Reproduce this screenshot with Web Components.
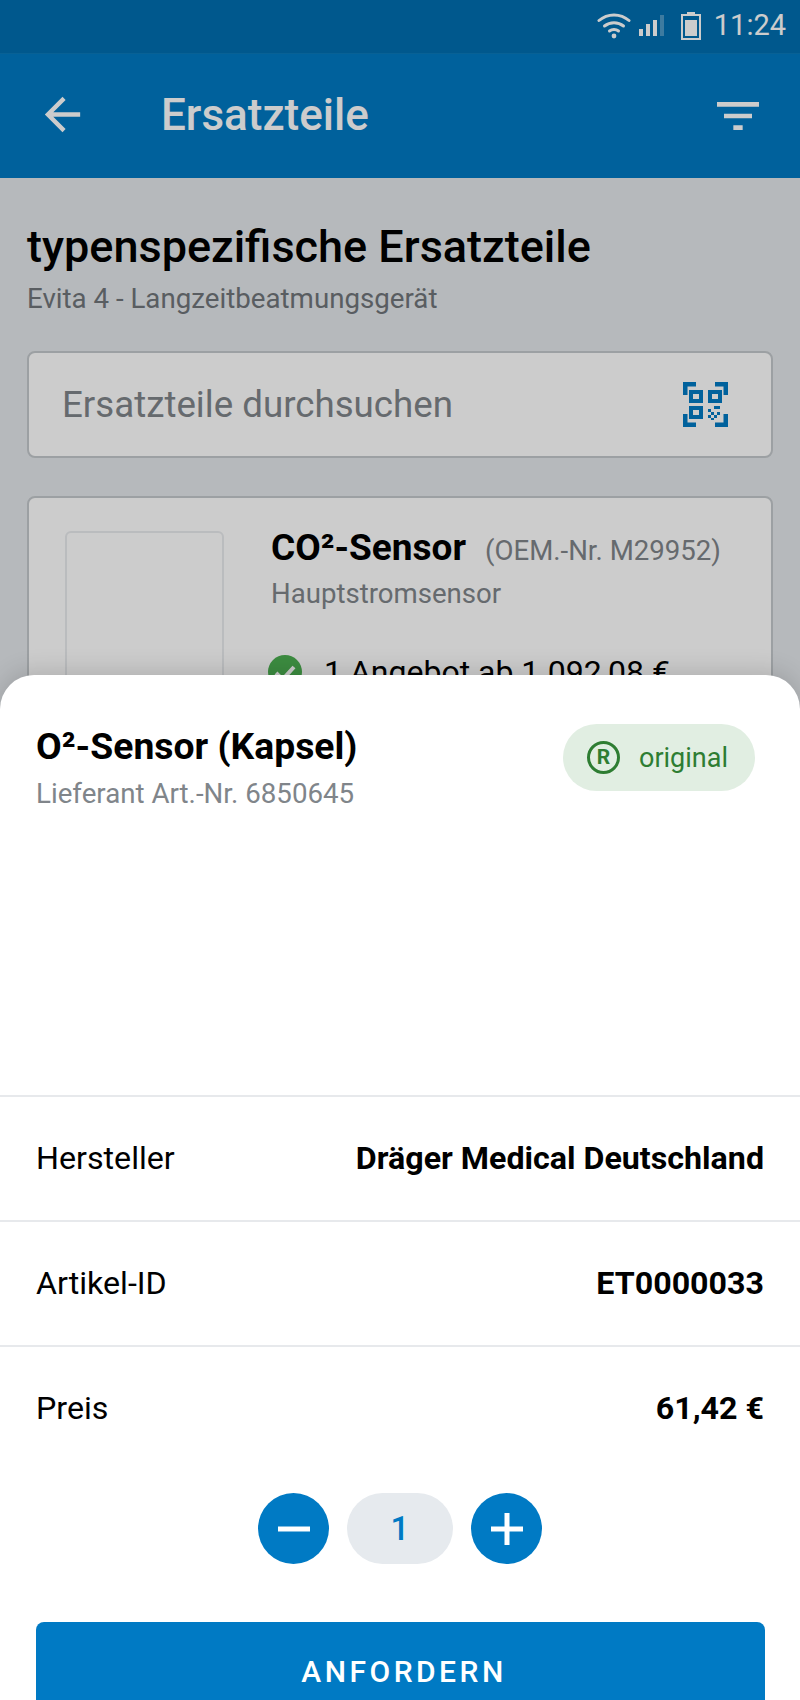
<!DOCTYPE html>
<html lang="de">
<head>
<meta charset="utf-8">
<title>Ersatzteile</title>
<style>
  html, body { margin:0; padding:0; background:#e4e8eb; }
  body { font-family:Roboto, "Liberation Sans", sans-serif; }
</style>
</head>
<body>
<ds-app>
  <ds-status-bar time="11:24"></ds-status-bar>
  <ds-app-bar title="Ersatzteile"></ds-app-bar>
  <ds-page-head title="typenspezifische Ersatzteile" subtitle="Evita 4 - Langzeitbeatmungsgerät"></ds-page-head>
  <ds-search placeholder="Ersatzteile durchsuchen"></ds-search>
  <ds-part-card name="CO²-Sensor" oem="(OEM.-Nr. M29952)" kind="Hauptstromsensor" offer="1 Angebot ab 1.092,08 €"></ds-part-card>

  <ds-sheet slot="sheet">
    <ds-sheet-head name="O²-Sensor (Kapsel)" ref="Lieferant Art.-Nr. 6850645">
      <ds-badge>original</ds-badge>
    </ds-sheet-head>
    <ds-row label="Hersteller" value="Dräger Medical Deutschland"></ds-row>
    <ds-row label="Artikel-ID" value="ET0000033"></ds-row>
    <ds-row label="Preis" value="61,42 €" plain></ds-row>
    <ds-stepper value="1"></ds-stepper>
    <ds-button>ANFORDERN</ds-button>
  </ds-sheet>
</ds-app>

<script>
// small helper: every element just writes its markup into an open shadow root
class Base extends HTMLElement {
  connectedCallback(){
    if (!this.shadowRoot) this.attachShadow({ mode:'open' });
    this.shadowRoot.innerHTML = this.render();
  }
  attr(name){ return this.getAttribute(name) || ''; }
}

class DsApp extends Base {
  render(){ return `
    <style>
      :host { display:block; position:relative; width:800px; height:1700px; overflow:hidden; background:#e4e8eb; }
      .scrim { position:absolute; inset:0; background:rgba(0,0,0,.2); }
    </style>
    <slot></slot>
    <div class="scrim"></div>
    <slot name="sheet"></slot>
  `; }
}

class DsStatusBar extends Base {
  render(){ return `
    <style>
      :host { display:flex; align-items:center; justify-content:flex-end; box-sizing:border-box; height:54px;
        background:#006fb1; border-bottom:1px solid #0a7abb; color:#fff; padding:0 14px 2px 0; }
      svg { display:block; }
      .wifi { margin-right:8px; }
      .bars { margin-right:17px; }
      .batt { margin-right:13px; }
      .time { font-size:29px; font-weight:400; line-height:1; }
    </style>
    <svg class="wifi" width="34" height="27" viewBox="0 0 34 27" fill="none" stroke="#fff" stroke-width="3" stroke-linecap="round">
      <path d="M2 8.500C10.500 1 23.500 1 32 8.500"/>
      <path d="M7.500 14C13 9.500 21 9.500 26.500 14"/>
      <path d="M12.500 19C15 17 19 17 21.500 19"/>
      <circle cx="17" cy="24" r="2.400" fill="#fff" stroke="none"/>
    </svg>
    <svg class="bars" width="25" height="21" viewBox="0 0 25 21" fill="#fff">
      <rect x="0" y="14" width="4" height="7"/>
      <rect x="7" y="9" width="4" height="12"/>
      <rect x="14" y="5" width="4" height="16"/>
      <rect x="21" y="0" width="4" height="21" opacity=".3"/>
    </svg>
    <svg class="batt" width="20" height="28" viewBox="0 0 20 28" fill="none" stroke="#fff">
      <rect x="6" y="0" width="8" height="3" fill="#fff" stroke="none"/>
      <rect x="1" y="3" width="18" height="24" stroke-width="2"/>
      <rect x="4" y="8" width="12" height="16" fill="#fff" stroke="none"/>
    </svg>
    <span class="time">${this.attr('time')}</span>
  `; }
}

class DsAppBar extends Base {
  render(){ return `
    <style>
      :host { display:flex; align-items:center; box-sizing:border-box; height:124px; background:#007ac4; color:#fff; padding:0 34px 0 36px; }
      svg { display:block; fill:#fff; }
      .back { margin-top:-4px; }
      h1 { flex:1; margin:0 0 2px 72px; font-size:44px; font-weight:500; line-height:1; }
    </style>
    <svg class="back" width="53" height="53" viewBox="0 0 24 24"><path d="M20 11H7.830l5.590-5.590L12 4l-8 8 8 8 1.410-1.410L7.830 13H20z"/></svg>
    <h1>${this.attr('title')}</h1>
    <svg width="56" height="56" viewBox="0 0 24 24"><path d="M10 18h4v-2h-4v2zM3 6v2h18V6H3zm3 7h12v-2H6v2z"/></svg>
  `; }
}

class DsPageHead extends Base {
  render(){ return `
    <style>
      :host { display:block; padding:46px 27px 0; }
      h2 { margin:0; font-size:45px; font-weight:500; line-height:46px; color:#000; }
      p { margin:13px 0 0; font-size:27.700px; line-height:32px; color:#70757a; }
    </style>
    <h2>${this.attr('title')}</h2>
    <p>${this.attr('subtitle')}</p>
  `; }
}

class DsSearch extends Base {
  render(){ return `
    <style>
      :host { display:flex; align-items:center; justify-content:space-between; box-sizing:border-box; height:107px;
        margin:36px 27px 0 27px; padding:0 43px 0 33px; background:#fff; border:2px solid #c4c8cc; border-radius:8px; }
      span { font-size:36.700px; color:#80858a; }
      svg { display:block; fill:#007ac4; }
    </style>
    <span>${this.attr('placeholder')}</span>
    <svg width="45" height="45" viewBox="0 0 45 45">
      <path d="M0 13V0h13v4.500H4.500V13zM32 0h13v13h-4.500V4.500H32zM0 32h4.500v8.500H13V45H0zM40.500 32H45v13H32v-4.500h8.500z"/>
      <path fill-rule="evenodd" d="M6 8h14v13H6zm4 4v5h6v-5zM25 8h14v13H25zm4 4v5h6v-5zM6 24h14v13H6zm4 4v5h6v-5z"/>
      <path d="M25 27h3v3h-3zM31 24h3v3h-3zM37 27h-3v-3h3zM28 30h3v3h-3zM34 30h3v3h-3zM25 33h3v3h-3zM31 33h3v3h-3zM28 36h3v2h-3z"/>
    </svg>
  `; }
}

class DsPartCard extends Base {
  render(){ return `
    <style>
      :host { display:grid; grid-template-columns:159px 1fr; column-gap:47px; box-sizing:border-box; height:300px;
        margin:38px 27px 0 27px; padding:33px 0 0 36px; background:#fff; border:2px solid #c4c8cc; border-radius:8px; }
      .thumb { height:230px; box-sizing:border-box; border:2px solid #e9ebee; border-radius:6px; }
      .title { display:flex; align-items:baseline; gap:19px; margin-top:-5px; }
      b { font-size:37px; font-weight:700; line-height:44px; color:#000; }
      .oem { font-size:27.600px; color:#80858a; }
      .kind { margin-top:8px; font-size:27.600px; line-height:32px; color:#80858a; }
      .offer { display:flex; align-items:center; gap:22px; margin:43px 0 0 -3px; font-size:32px; color:#000; }
      svg { display:block; flex:none; }
    </style>
    <div class="thumb"></div>
    <div>
      <div class="title"><b>${this.attr('name')}</b><span class="oem">${this.attr('oem')}</span></div>
      <div class="kind">${this.attr('kind')}</div>
      <div class="offer">
        <svg width="34" height="34" viewBox="0 0 34 34"><circle cx="17" cy="17" r="17" fill="#4caf50"/><path d="M8 18l6.500 6.500L26 12" fill="none" stroke="#fff" stroke-width="4"/></svg>
        <span>${this.attr('offer')}</span>
      </div>
    </div>
  `; }
}

// the sheet lies over the dimmed page, so this is the one absolute box
class DsSheet extends Base {
  render(){ return `
    <style>
      :host { position:absolute; left:0; right:0; top:675px; bottom:0; overflow:hidden; background:#fff;
        border-radius:34px 34px 0 0; box-shadow:0 -4px 24px rgba(0,0,0,.14); display:block; }
    </style>
    <slot></slot>
  `; }
}

class DsSheetHead extends Base {
  render(){ return `
    <style>
      :host { display:flex; justify-content:space-between; align-items:flex-start; box-sizing:border-box; height:422px;
        padding:49px 45px 0 36px; border-bottom:2px solid #e7e9ec; }
      h3 { margin:0; font-size:37.300px; font-weight:700; line-height:44px; color:#000; }
      p { margin:10px 0 0; font-size:27.700px; line-height:32px; color:#80858a; }
    </style>
    <div>
      <h3>${this.attr('name')}</h3>
      <p>${this.attr('ref')}</p>
    </div>
    <slot></slot>
  `; }
}

class DsBadge extends Base {
  render(){ return `
    <style>
      :host { display:flex; align-items:center; gap:19px; box-sizing:border-box; height:67px; padding:0 27px 0 24px;
        border-radius:34px; background:#e1eee2; color:#2e7d32; font-size:27px; }
      .r { display:flex; align-items:center; justify-content:center; box-sizing:border-box; width:33px; height:33px;
        border:3px solid #2e7d32; border-radius:50%; font-size:21px; font-weight:700; line-height:1; }
    </style>
    <span class="r">R</span>
    <slot></slot>
  `; }
}

class DsRow extends Base {
  render(){ return `
    <style>
      :host { display:flex; align-items:center; justify-content:space-between; box-sizing:border-box; height:125px;
        padding:0 36px; border-bottom:2px solid #e7e9ec; font-size:32.200px; color:#000; }
      :host([plain]) { border-bottom:0; }
      b { font-weight:700; }
      span, b { margin-top:-2px; }
      :host([plain]) span, :host([plain]) b { margin-top:-4px; }
    </style>
    <span>${this.attr('label')}</span>
    <b>${this.attr('value')}</b>
  `; }
}

class DsStepper extends Base {
  render(){ return `
    <style>
      :host { display:flex; justify-content:center; gap:18px; margin-top:21px; }
      .btn { width:71px; height:71px; border-radius:50%; background:#007ac4; display:flex; align-items:center; justify-content:center; }
      .val { width:106px; height:71px; border-radius:36px; background:#e6eaee; color:#007ac4; font-size:33px; font-weight:500; display:flex; align-items:center; justify-content:center; }
      svg { display:block; stroke:#fff; stroke-width:5; }
    </style>
    <div class="btn"><svg width="32" height="32" viewBox="0 0 32 32"><path d="M0 16h32"/></svg></div>
    <div class="val">${this.attr('value')}</div>
    <div class="btn"><svg width="32" height="32" viewBox="0 0 32 32"><path d="M0 16h32M16 0v32"/></svg></div>
  `; }
}

class DsButton extends Base {
  render(){ return `
    <style>
      :host { display:flex; align-items:center; justify-content:center; box-sizing:border-box; height:98px;
        margin:58px 35px 0 36px; padding-left:7px; border-radius:8px; background:#007ac4; color:#fff; font-size:30px; font-weight:500; letter-spacing:3.500px; }
    </style>
    <slot></slot>
  `; }
}

customElements.define('ds-app', DsApp);
customElements.define('ds-status-bar', DsStatusBar);
customElements.define('ds-app-bar', DsAppBar);
customElements.define('ds-page-head', DsPageHead);
customElements.define('ds-search', DsSearch);
customElements.define('ds-part-card', DsPartCard);
customElements.define('ds-sheet', DsSheet);
customElements.define('ds-sheet-head', DsSheetHead);
customElements.define('ds-badge', DsBadge);
customElements.define('ds-row', DsRow);
customElements.define('ds-stepper', DsStepper);
customElements.define('ds-button', DsButton);
</script>
</body>
</html>
